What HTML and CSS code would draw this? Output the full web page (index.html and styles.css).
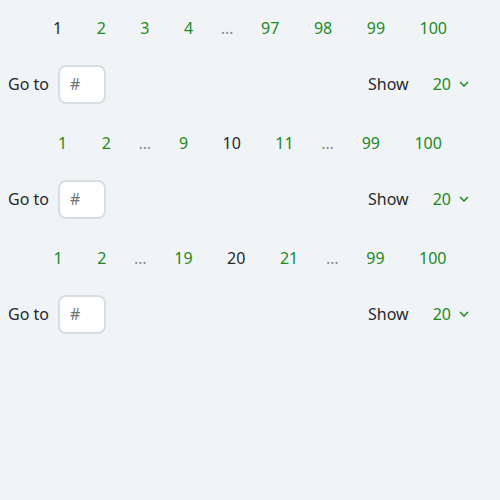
FILE: index.html
```html
<!DOCTYPE html>
<html>
<head>
<meta charset="utf-8">
<link rel="stylesheet" href="styles.css">
</head>
<body>
<div class="pagination">
  <nav class="pages">
    <span class="page current">1</span>
    <a class="page">2</a>
    <a class="page">3</a>
    <a class="page">4</a>
    <span class="ellipsis">…</span>
    <a class="page">97</a>
    <a class="page">98</a>
    <a class="page">99</a>
    <a class="page">100</a>
  </nav>
  <div class="controls">
    <label class="goto">Go to <span class="input">#</span></label>
    <div class="show">Show <span class="select">20 <svg class="chev" width="10" height="6" viewBox="0 0 10 6"><path d="M1 1 L5 5 L9 1" fill="none" stroke="currentColor" stroke-width="1.5"/></svg></span></div>
  </div>
</div>
<div class="pagination">
  <nav class="pages">
    <a class="page">1</a>
    <a class="page">2</a>
    <span class="ellipsis">…</span>
    <a class="page">9</a>
    <span class="page current">10</span>
    <a class="page">11</a>
    <span class="ellipsis">…</span>
    <a class="page">99</a>
    <a class="page">100</a>
  </nav>
  <div class="controls">
    <label class="goto">Go to <span class="input">#</span></label>
    <div class="show">Show <span class="select">20 <svg class="chev" width="10" height="6" viewBox="0 0 10 6"><path d="M1 1 L5 5 L9 1" fill="none" stroke="currentColor" stroke-width="1.5"/></svg></span></div>
  </div>
</div>
<div class="pagination">
  <nav class="pages">
    <a class="page">1</a>
    <a class="page">2</a>
    <span class="ellipsis">…</span>
    <a class="page">19</a>
    <span class="page current">20</span>
    <a class="page">21</a>
    <span class="ellipsis">…</span>
    <a class="page">99</a>
    <a class="page">100</a>
  </nav>
  <div class="controls">
    <label class="goto">Go to <span class="input">#</span></label>
    <div class="show">Show <span class="select">20 <svg class="chev" width="10" height="6" viewBox="0 0 10 6"><path d="M1 1 L5 5 L9 1" fill="none" stroke="currentColor" stroke-width="1.5"/></svg></span></div>
  </div>
</div>
</body>
</html>
```
FILE: styles.css
```css
html, body {
  background: #f1f4f7;
}
body {
  margin: 8px;
  font-family: "Noto Sans", sans-serif;
  font-size: 16px;
  color: #25292e;
}
.pagination {
  display: flex;
  flex-direction: column;
  gap: 16px;
  margin-bottom: 19px;
}
.pages {
  display: flex;
  justify-content: center;
  align-items: center;
  height: 40px;
  gap: 19.5px;
}
.page {
  padding: 0 7.5px;
  color: #1c8a1c;
  line-height: 40px;
}
.page.current {
  color: #25292e;
}
.ellipsis {
  color: #8a9097;
  width: 14px;
  text-align: center;
  font-size: 16px;
}
.controls {
  display: flex;
  justify-content: space-between;
  align-items: center;
  height: 40px;
}
.goto {
  display: flex;
  align-items: center;
  gap: 9px;
}
.input {
  box-sizing: border-box;
  width: 48px;
  height: 39px;
  border: 2px solid #d6dee6;
  border-radius: 8px;
  background: #fff;
  padding-left: 10px;
  display: flex;
  align-items: center;
  color: #70757a;
}
.show {
  display: flex;
  align-items: center;
  gap: 24px;
  padding-right: 23px;
}
.select {
  display: flex;
  align-items: center;
  gap: 8px;
  color: #1c8a1c;
}
.chev {
  display: block;
}
```
